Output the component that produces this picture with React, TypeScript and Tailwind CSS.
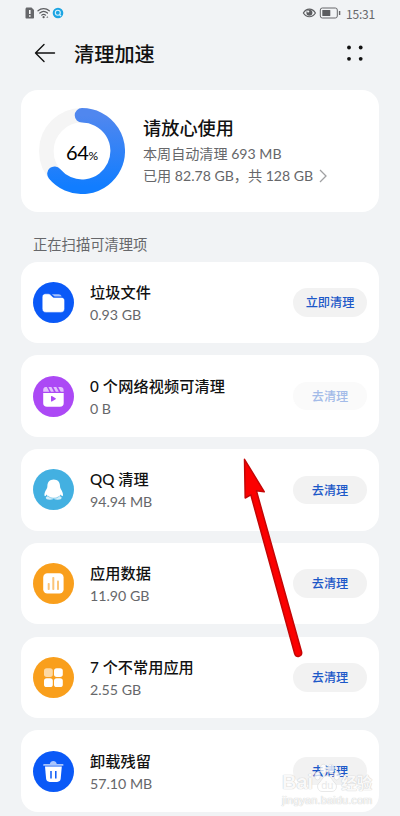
import React from "react";

interface CleanItem {
  id: string;
  title: string;
  size: string;
  action: string;
  disabled?: boolean;
  titleSpacing: string;
  icon: React.ReactNode;
}

const FolderIcon = () => (
  <svg viewBox="0 0 41 41" className="w-[41px] h-[41px]">
    <circle cx="20.5" cy="20.5" r="20.5" fill="#0a59f7" />
    <path d="M18.8 12.3h6.7c1.5 0 2.5.8 3.2 2.3h-7.1z" fill="#a9c4fc" />
    <path
      d="M9.2 15.2c0-2.2 1.2-3.4 3.4-3.4h2.6c1 0 1.7.3 2.4 1l1.9 2c.4.4.8.6 1.4.6h7.3c2.2 0 3.4 1.2 3.4 3.4v7.7c0 2.5-1.4 3.9-3.9 3.9H13.1c-2.5 0-3.9-1.4-3.9-3.9z"
      fill="#fff"
      stroke="#0a59f7"
      strokeWidth="0.5"
    />
  </svg>
);

const VideoIcon = () => (
  <svg viewBox="0 0 41 41" className="w-[41px] h-[41px]">
    <circle cx="20.5" cy="20.5" r="20.5" fill="#ac49f5" />
    <path
      d="M12.6 11h1.2l2.5 4.7h-6.1v-1.5c0-1.8.8-3 2.4-3.2zM15.400 11h3l2.500 4.700h-3zM20.300 11h3l2.500 4.700h-3zM25.200 11h2.200c2 0 3.200 1.200 3.200 3.200v1.500h-2.900z"
      fill="#e3c3fc"
    />
    <path
      d="M10.200 17h20.500v10c0 2.500-1.300 3.800-3.800 3.800H14c-2.500 0-3.800-1.300-3.800-3.800z"
      fill="#fff"
    />
    <path
      d="M18 20.600v4.300c0 .5.500.8.900.5l3.700-2.100c.4-.3.400-.8 0-1.100l-3.700-2.100c-.4-.3-.9 0-.9.500z"
      fill="#ac49f5"
    />
  </svg>
);

const PenguinIcon = () => (
  <svg viewBox="0 0 41 41" className="w-[41px] h-[41px]">
    <circle cx="20.5" cy="20.5" r="20.5" fill="#43b0e1" />
    <ellipse cx="16.8" cy="28.8" rx="4" ry="1.9" fill="#d4eef9" />
    <ellipse cx="24.6" cy="28.8" rx="4" ry="1.9" fill="#d4eef9" />
    <path
      d="M20.700 10.500c-4 0-6.300 2.800-6.300 6.600 0 1-.2 1.800-.8 2.800-1.300 2-2.200 4.100-2.200 5.900 0 1.200.5 1.600 1.100 1.200.5-.3.900-.9 1.300-1.500.5 1.400 1.200 2.100 2.200 2.700 1.300.7 2.900 1 4.700 1s3.400-.3 4.700-1c1-.6 1.700-1.300 2.200-2.700.4.600.8 1.200 1.300 1.500.6.400 1.100 0 1.100-1.200 0-1.800-.9-3.900-2.200-5.900-.6-1-.8-1.800-.8-2.800 0-3.800-2.300-6.600-6.300-6.600z"
      fill="#fff"
    />
    <path
      d="M15 27c1.600 1.600 3.400 2.200 5.700 2.200s4.100-.6 5.700-2.200"
      fill="none"
      stroke="#43b0e1"
      strokeWidth="0.6"
    />
  </svg>
);

const ChartIcon = () => (
  <svg viewBox="0 0 41 41" className="w-[41px] h-[41px]">
    <circle cx="20.5" cy="20.5" r="20.5" fill="#f99f1c" />
    <rect x="10.2" y="10.2" width="20.4" height="20.4" rx="4.2" fill="#fff" />
    <g fill="#fbc478">
      <rect x="14.7" y="20" width="2" height="7" rx="0.8" />
      <rect x="19.3" y="14" width="2" height="13" rx="0.8" />
      <rect x="24" y="17.5" width="2" height="9.5" rx="0.8" />
    </g>
  </svg>
);

const AppsIcon = () => (
  <svg viewBox="0 0 41 41" className="w-[41px] h-[41px]">
    <circle cx="20.5" cy="20.5" r="20.5" fill="#f99f1c" />
    <rect x="11" y="11.2" width="8.8" height="8.8" rx="2.7" fill="#fdd9a4" />
    <rect x="21" y="11.2" width="8.8" height="8.8" rx="2.7" fill="#fff" />
    <rect x="11" y="21.3" width="8.8" height="8.8" rx="2.7" fill="#fff" />
    <rect x="21" y="21.3" width="8.8" height="8.8" rx="2.7" fill="#fff" />
  </svg>
);

const TrashIcon = () => (
  <svg viewBox="0 0 41 41" className="w-[41px] h-[41px]">
    <circle cx="20.5" cy="20.5" r="20.5" fill="#0a59f7" />
    <path
      d="M16.800 13c.4-1.900 1.700-3 3.500-3s3.100 1.100 3.500 3h5.700c.6 0 1 .4 1 .9s-.4.9-1 .9H11.100c-.6 0-1-.4-1-.9s.4-.9 1-.9z"
      fill="#a9c4fc"
    />
    <path
      d="M12 15.400h16.800l-1.100 12.200c-.2 2.200-1.400 3.300-3.600 3.300h-7.400c-2.200 0-3.400-1.100-3.600-3.300z"
      fill="#fff"
    />
    <path d="M18 19.900v7.500M22.800 19.900v7.500" stroke="#0a59f7" strokeWidth="1.5" />
  </svg>
);

const items: CleanItem[] = [
  { id: "junk", title: "垃圾文件", size: "0.93 GB", action: "立即清理", titleSpacing: "tracking-[0.1px]", icon: <FolderIcon /> },
  { id: "video", title: "0 个网络视频可清理", size: "0 B", action: "去清理", disabled: true, titleSpacing: "tracking-[0.1px]", icon: <VideoIcon /> },
  { id: "qq", title: "QQ 清理", size: "94.94 MB", action: "去清理", titleSpacing: "tracking-[0px]", icon: <PenguinIcon /> },
  { id: "data", title: "应用数据", size: "11.90 GB", action: "去清理", titleSpacing: "tracking-[0.1px]", icon: <ChartIcon /> },
  { id: "unused", title: "7 个不常用应用", size: "2.55 GB", action: "去清理", titleSpacing: "tracking-[0px]", icon: <AppsIcon /> },
  { id: "residue", title: "卸载残留", size: "57.10 MB", action: "去清理", titleSpacing: "tracking-[0.1px]", icon: <TrashIcon /> },
];

const StatusBar = () => (
  <div className="flex h-[26px] items-center justify-between px-[25px]">
    <svg viewBox="0 0 40 12" className="h-3 w-10">
      <path d="M2 .5h4.500L9 3v7.500c0 .6-.4 1-1 1H1.500c-.6 0-1-.4-1-1V2c0-.8.600-1.500 1.500-1.500z" fill="#66676a" />
      <path d="M4.800 3v4M4.800 8.200v1.500" stroke="#fff" strokeWidth="1.5" />
      <g fill="none" stroke="#5c5d60" strokeWidth="1.2" strokeLinecap="round">
        <path d="M13 3.800c3.300-3 8-3 11.300 0M14.800 6c2.300-2 5.400-2 7.700 0M16.700 8.100c1.200-1 2.700-1 3.900 0" />
      </g>
      <circle cx="18.6" cy="10.2" r="1.1" fill="#5c5d60" />
      <path d="M21.300 10.700l1-1.800 1 1.800z" fill="#77787a" />
      <circle cx="33" cy="6" r="5.3" fill="#1ca4e2" />
      <circle cx="32.8" cy="5.7" r="2.5" fill="none" stroke="#d9f3ff" strokeWidth="1.1" />
      <path d="M34.600 7.700l1.500 1.400" stroke="#d9f3ff" strokeWidth="1.2" />
    </svg>
    <div className="flex items-center">
      <svg viewBox="0 0 40 12" className="mr-1 h-3 w-10">
        <path d="M1.400 6c3-5.200 9-5.200 12 0-3 5-9 5-12 0z" fill="none" stroke="#5c5d60" strokeWidth="1.2" />
        <circle cx="7.4" cy="5.7" r="3" fill="#5c5d60" />
        <circle cx="6.2" cy="4.5" r="1.1" fill="#f1f3f5" />
        <rect x="18.3" y="1" width="17" height="10" rx="2" fill="none" stroke="#66676a" />
        <rect x="20.3" y="3" width="8" height="6" rx="0.6" fill="#5c5d60" />
        <path d="M37.600 4v4" stroke="#66676a" strokeWidth="1.4" />
      </svg>
      <span className="pt-px font-['Noto_Sans_CJK_SC',sans-serif] text-[12px] leading-none tracking-[-0.2px] text-[#66676a]">
        15:31
      </span>
    </div>
  </div>
);

const Header = () => (
  <div className="flex h-[54px] items-center pl-[34px] pr-9">
    <svg viewBox="0 0 22 20" className="h-5 w-[22px]" fill="none" stroke="#111" strokeWidth="1.4" strokeLinecap="round" strokeLinejoin="round">
      <path d="M20.500 10H1.500M10 1.500L1.500 10l8.500 8.500" />
    </svg>
    <h1 className="ml-[18px] flex-1 pt-[2px] text-[20.2px] font-medium leading-7 text-[#111]">清理加速</h1>
    <svg viewBox="0 0 18 18" className="h-[18px] w-[18px]" fill="#111">
      <circle cx="3" cy="3.5" r="1.9" />
      <circle cx="14.7" cy="3.5" r="1.9" />
      <circle cx="3" cy="14.8" r="1.9" />
      <circle cx="14.7" cy="14.8" r="1.9" />
    </svg>
  </div>
);

const UsageRing = () => (
  <div className="grid h-[86px] w-[86px] place-items-center">
    <svg viewBox="0 0 86 86" className="col-start-1 row-start-1 h-[86px] w-[86px]">
      <defs>
        <linearGradient id="ring" x1="0" y1="0" x2="0" y2="1">
          <stop offset="0" stopColor="#5087ef" />
          <stop offset="1" stopColor="#117dff" />
        </linearGradient>
      </defs>
      <circle cx="43" cy="43" r="35.7" fill="none" stroke="#f5f5f5" strokeWidth="14.6" />
      <path
        d="M43 7.300A35.700 35.700 0 1 1 15.500 65.750"
        fill="none"
        stroke="url(#ring)"
        strokeWidth="14.6"
        strokeLinecap="round"
      />
    </svg>
    <div className="col-start-1 row-start-1 flex items-baseline pt-px leading-none text-black">
      <span className="text-[20px] tracking-[-0.3px]">64</span>
      <span className="text-[12px]">%</span>
    </div>
  </div>
);

const SummaryCard = () => (
  <div className="flex h-[122px] items-center rounded-[17px] bg-white pl-[18px]">
    <UsageRing />
    <div className="ml-[18px] pb-px">
      <h2 className="text-[18.2px] font-medium leading-[29px] text-[#111]">请放心使用</h2>
      <p className="whitespace-nowrap text-[14.1px] leading-[21px] text-[#66676a]">本周自动清理 693 MB</p>
      <p className="flex items-center whitespace-nowrap text-[14.1px] leading-[23px] text-[#66676a]">
        已用 82.78 GB，共 128 GB
        <svg viewBox="0 0 8 14" className="ml-[6px] h-[14px] w-2" fill="none" stroke="#a0a1a3" strokeWidth="1.3">
          <path d="M1 1l6 6-6 6" />
        </svg>
      </p>
    </div>
  </div>
);

const CleanRow = ({ item }: { item: CleanItem }) => (
  <div className="flex h-[81.5px] items-center rounded-[17px] bg-white px-3">
    {item.icon}
    <div className="ml-4 flex-1 pt-px">
      <h3 className={`whitespace-nowrap text-[15.2px] font-medium leading-[23px] text-[#111] ${item.titleSpacing}`}>
        {item.title}
      </h3>
      <p className="text-[14.2px] leading-[21px] text-[#66676a]">{item.size}</p>
    </div>
    <button
      className={`h-[28.5px] w-[74px] rounded-full pt-[2px] text-[12.2px] font-medium ${
        item.disabled ? "bg-[#fafafa] text-[#a3bbe8]" : "bg-[#f2f2f2] text-[#1c58c8]"
      }`}
    >
      {item.action}
    </button>
  </div>
);

const Watermark = () => (
  <div className="pointer-events-none absolute left-[282px] top-[762px] w-[96px] font-['Liberation_Sans','Noto_Sans_CJK_SC',sans-serif] text-white/90 [text-shadow:0_0_1px_#c4c4c4,0_0_1px_#d4d4d4]">
    <div className="flex h-[31px] items-end whitespace-nowrap">
      <span className="text-[20px] font-bold leading-[22px]">Bai</span>
      <svg viewBox="0 0 28 30" className="h-[30px] w-7" fill="#fff" fillOpacity="0.75" stroke="#dadada" strokeWidth="0.6">
        <ellipse cx="4.5" cy="13" rx="2.8" ry="4" />
        <ellipse cx="10.3" cy="5.8" rx="3" ry="4.5" />
        <ellipse cx="18" cy="5.8" rx="3" ry="4.5" />
        <ellipse cx="23.7" cy="13" rx="2.8" ry="4" />
        <path d="M14 12.500c-4 0-5 5-8 7.500-3 3-1 8.500 3 8.500h10c4 0 6-5.500 3-8.500-3-2.500-4-7.500-8-7.500z" />
        <text x="8.2" y="26" fontSize="11" fill="#e2e2e2" stroke="none" className="[text-shadow:none]">du</text>
      </svg>
      <span className="text-[15.5px] font-bold leading-[19px]">经验</span>
    </div>
    <div className="text-[11px] leading-[14px] tracking-[0.1px]">jingyan.baidu.com</div>
  </div>
);

const App: React.FC = () => {
  return (
    <div className="relative h-[816px] w-[400px] overflow-hidden bg-[#f1f3f5] font-['Lato','Noto_Sans_CJK_SC',sans-serif]">
      <StatusBar />
      <Header />
      <div className="px-[21px] pt-[10px]">
        <SummaryCard />
        <div className="h-[49.5px] pl-3 pt-[22px] text-[14.3px] leading-[21px] text-[#66676a]">
          正在扫描可清理项
        </div>
        <div className="flex flex-col gap-[12.3px]">
          {items.map((item) => (
            <CleanRow key={item.id} item={item} />
          ))}
        </div>
      </div>

      {/* Pointer arrow over the list */}
      <svg viewBox="0 0 64 204" className="pointer-events-none absolute left-[240px] top-[455px] h-[204px] w-16">
        <path
          d="M4.500 4.300L24.300 36.800 16.400 35.800 61.600 197c.8 4.500-5.200 6.300-6.900 1.700L10.800 39.800 5.200 43z"
          fill="#fb0000"
          stroke="#c40606"
          strokeWidth="1.5"
          strokeLinejoin="round"
        />
      </svg>

      <Watermark />
    </div>
  );
};

export default App;
